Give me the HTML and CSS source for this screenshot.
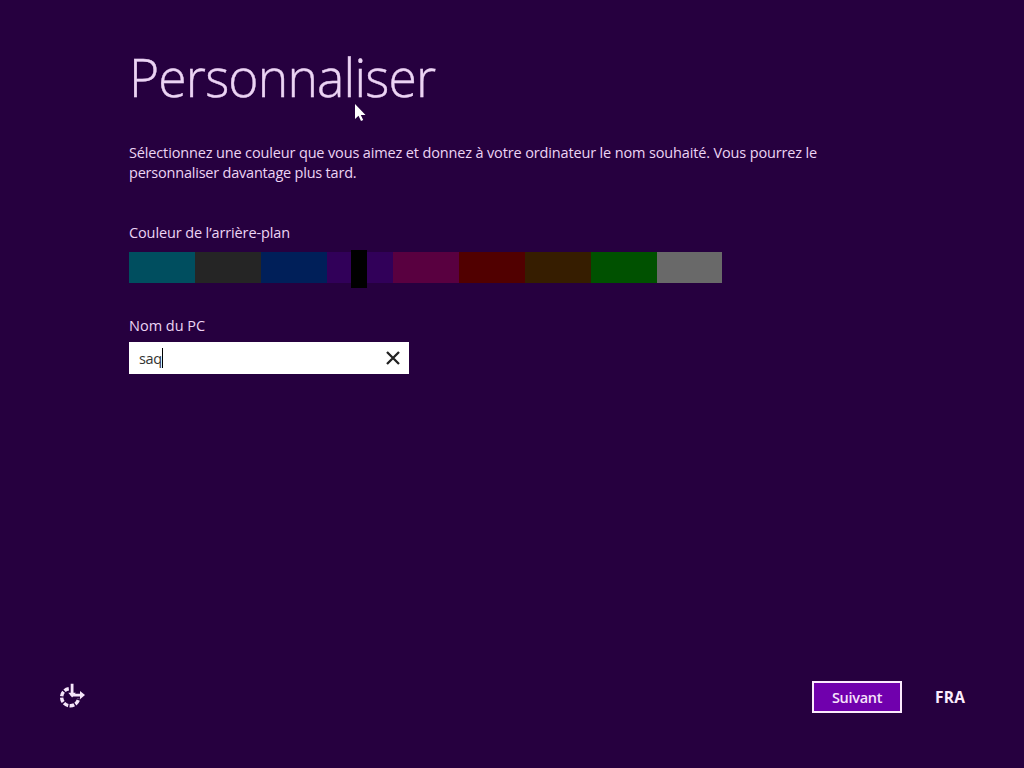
FILE: index.html
```html
<!DOCTYPE html>
<html lang="fr">
<head>
<meta charset="utf-8">
<title>Personnaliser</title>
<link rel="stylesheet" href="styles.css">
</head>
<body>
<main class="setup">
  <h1 class="title">Personnaliser</h1>
  <p class="intro">Sélectionnez une couleur que vous aimez et donnez à votre ordinateur le nom souhaité. Vous pourrez le<br><span class="second">personnaliser davantage plus tard.</span></p>
  <div class="label color-label">Couleur de l’arrière-plan</div>
  <div class="palette">
    <span class="swatch teal"></span><span class="swatch charcoal"></span><span class="swatch blue"></span><span class="swatch purple"><i class="thumb"></i></span><span class="swatch magenta"></span><span class="swatch red"></span><span class="swatch brown"></span><span class="swatch green"></span><span class="swatch gray"></span>
  </div>
  <div class="label name-label">Nom du PC</div>
  <div class="field"><span class="value">saq</span><span class="caret"></span>
    <svg class="clear" width="14" height="14" viewBox="0 0 14 14"><path d="M1 1L13 13M13 1L1 13" stroke="#222" stroke-width="2.3" fill="none"/></svg>
  </div>
</main>
<footer class="footer">
  <svg class="access" width="28" height="28" viewBox="0 0 28 28"><path d="M10.8 5.7A8.6 8.6 0 1 0 20.7 15.6" fill="none" stroke="#f6e6fa" stroke-width="3.4" stroke-dasharray="4.8 1.4"/><path d="M14.1 .8V12.8M14.1 12.1H23" fill="none" stroke="#f6e6fa" stroke-width="2.8"/><path d="M10.3 9.8L14.1 14.4L17.9 9.8ZM22 8L27 12.1L22 16.2Z" fill="#f6e6fa"/></svg>
  <button class="next">Suivant</button>
  <span class="lang">FRA</span>
</footer>
<svg class="cursor" width="14" height="20" viewBox="0 0 14 20"><path d="M1 1V16L4.5 12.8L7 18L9.2 17L6.8 12H11.5Z" fill="#fff"/></svg>
</body>
</html>
```
FILE: styles.css
```css
* { box-sizing: border-box; }
body {
  margin: 0;
  width: 1024px;
  height: 768px;
  overflow: hidden;
  display: flex;
  flex-direction: column;
  justify-content: space-between;
  background: #26003f;
  color: #ecd4f4;
  font-family: "Open Sans", "Noto Sans", sans-serif;
  font-size: 14.5px;
}
.setup { padding: 40px 0 0 129px; }
.title {
  margin: 0;
  height: 103px;
  font-size: 54px;
  font-weight: 300;
  line-height: 72px;
  letter-spacing: -0.85px;
  transform: scaleX(0.955);
  transform-origin: 0 0;
  -webkit-text-stroke: 0.4px #ecd4f4;
}
.intro { margin: 0; height: 80px; line-height: 20px; white-space: nowrap; letter-spacing: -0.145px; }
.second { letter-spacing: -0.21px; }
.label { line-height: 20px; white-space: nowrap; }
.color-label { height: 29px; letter-spacing: -0.12px; }
.palette { display: flex; width: 593px; height: 31px; }
.swatch { flex: 0 0 66px; }
.teal { background: #004e5f; }
.charcoal { background: #252525; }
.blue { background: #001f59; }
.purple { background: #310059; position: relative; }
.magenta { background: #590040; }
.red { background: #510000; }
.brown { background: #361d00; }
.green { background: #005100; }
.gray { flex-basis: 65px; background: #696969; }
.thumb { position: absolute; left: 24px; top: -2px; width: 16px; height: 38px; background: #000; }
.name-label { margin-top: 33px; height: 26px; }
.field {
  display: flex;
  align-items: center;
  width: 280px;
  height: 32px;
  padding: 0 9px 0 10px;
  background: #fff;
  color: #333;
}
.value { letter-spacing: -0.4px; }
.caret { width: 1px; height: 20px; background: #000; }
.clear { margin-left: auto; }
.footer { display: flex; align-items: center; height: 32px; margin-bottom: 55px; padding-left: 58px; }
.next {
  width: 90px;
  height: 32px;
  margin-left: 726px;
  padding: 0;
  border: 2px solid #fbeafd;
  background: #7000ad;
  color: #f7e3fb;
  font: 600 14.5px "Open Sans", sans-serif;
  letter-spacing: -0.3px;
}
.lang { margin: -1px 0 0 33px; font-size: 15.5px; font-weight: 700; color: #fbecfd; letter-spacing: 0.2px; }
.cursor { position: absolute; left: 354px; top: 103px; }
```
